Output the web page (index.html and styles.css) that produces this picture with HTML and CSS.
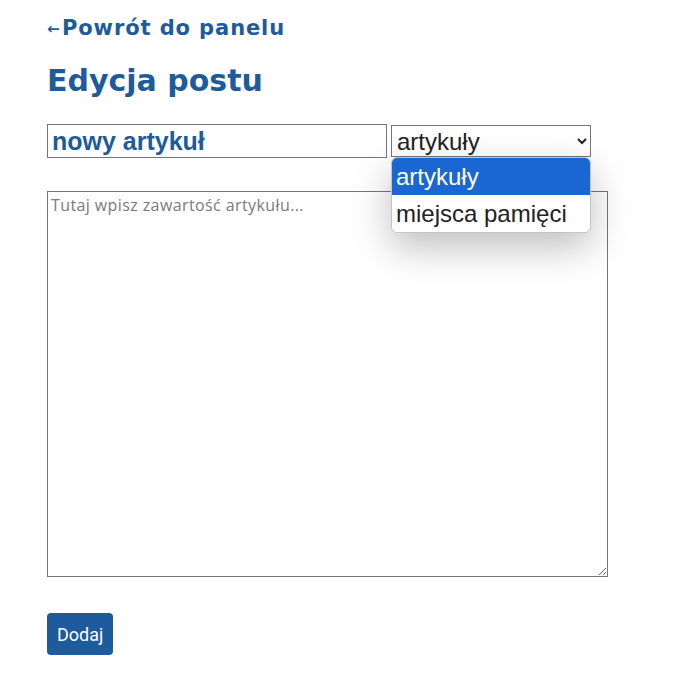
FILE: index.html
```html
<!DOCTYPE html>
<html lang="pl">
<head>
<meta charset="utf-8">
<title>Edycja postu</title>
<link rel="stylesheet" href="styles.css">
</head>
<body>
<main class="page">
  <a class="back-link" href="#"><span class="arrow">←</span>Powrót do panelu</a>
  <h1 class="title">Edycja postu</h1>
  <form class="post-form">
    <div class="row">
      <input class="title-input" type="text" value="nowy artykuł">
      <div class="select-wrap">
        <select class="category">
          <option>artykuły</option>
          <option>miejsca pamięci</option>
        </select>
        <div class="dropdown">
          <div class="opt opt-active">artykuły</div>
          <div class="opt">miejsca pamięci</div>
        </div>
      </div>
    </div>
    <textarea class="content" placeholder="Tutaj wpisz zawartość artykułu..."></textarea>
    <button class="submit" type="button">Dodaj</button>
  </form>
</main>
</body>
</html>
```

FILE: styles.css
```css
html, body {
  margin: 0;
  padding: 0;
  background: #ffffff;
}

.page {
  padding: 16px 0 0 47px;
  font-family: "DejaVu Sans", "Open Sans", sans-serif;
}

.back-link {
  display: block;
  color: #1d5b9c;
  font-weight: 700;
  font-size: 21px;
  letter-spacing: 0.9px;
  line-height: 25px;
  text-decoration: none;
  height: 25px;
  white-space: nowrap;
}

.arrow {
  display: inline-block;
  font-size: 15px;
  width: 15px;
  letter-spacing: 0;
  font-weight: 700;
  vertical-align: 1px;
}

.title {
  margin: 21px 0 0 0;
  color: #1d5b9c;
  font-weight: 700;
  font-size: 30px;
  line-height: 38px;
}

.post-form {
  margin-top: 24px;
  display: flex;
  flex-direction: column;
  align-items: flex-start;
}

.row {
  display: flex;
  align-items: center;
  gap: 4px;
}

.title-input {
  box-sizing: border-box;
  width: 340px;
  height: 34px;
  margin: 0;
  padding: 0 4px;
  border: 1px solid #767676;
  font-family: "Liberation Sans", Arial, sans-serif;
  font-weight: 700;
  font-size: 25px;
  color: #1d5b9c;
  outline: none;
}

.select-wrap {
  position: relative;
}

.category {
  box-sizing: border-box;
  width: 200px;
  height: 32px;
  margin: 0;
  padding: 0 0 0 1px;
  border: 1px solid #767676;
  border-radius: 0;
  background: #fff;
  font-family: "Liberation Sans", Arial, sans-serif;
  font-size: 24px;
  color: #222;
  display: block;
}

.dropdown {
  position: absolute;
  left: 0;
  top: 32px;
  width: 200px;
  box-sizing: border-box;
  background: #fff;
  border: 1px solid #c4c4c4;
  border-radius: 6px;
  overflow: hidden;
  box-shadow: 0 14px 38px rgba(0, 0, 0, 0.26);
  z-index: 2;
}

.opt {
  height: 37px;
  line-height: 37px;
  padding-left: 4px;
  font-family: "Liberation Sans", Arial, sans-serif;
  font-size: 24px;
  color: #222;
  white-space: nowrap;
}

.opt-active {
  background: #1a66d2;
  color: #fff;
}

.content {
  box-sizing: border-box;
  margin-top: 33px;
  width: 561px;
  height: 386px;
  border: 1px solid #767676;
  padding: 2px 3px;
  font-family: "Open Sans", sans-serif;
  font-size: 16px;
  letter-spacing: 0.4px;
  resize: both;
  outline: none;
}

.content::placeholder {
  color: #7a7a7a;
}

.submit {
  margin-top: 36px;
  box-sizing: border-box;
  height: 42px;
  padding: 0 10px;
  border: none;
  border-radius: 4px;
  background: #1d5b9c;
  color: #fff;
  font-family: Roboto, sans-serif;
  font-size: 18px;
}
```
